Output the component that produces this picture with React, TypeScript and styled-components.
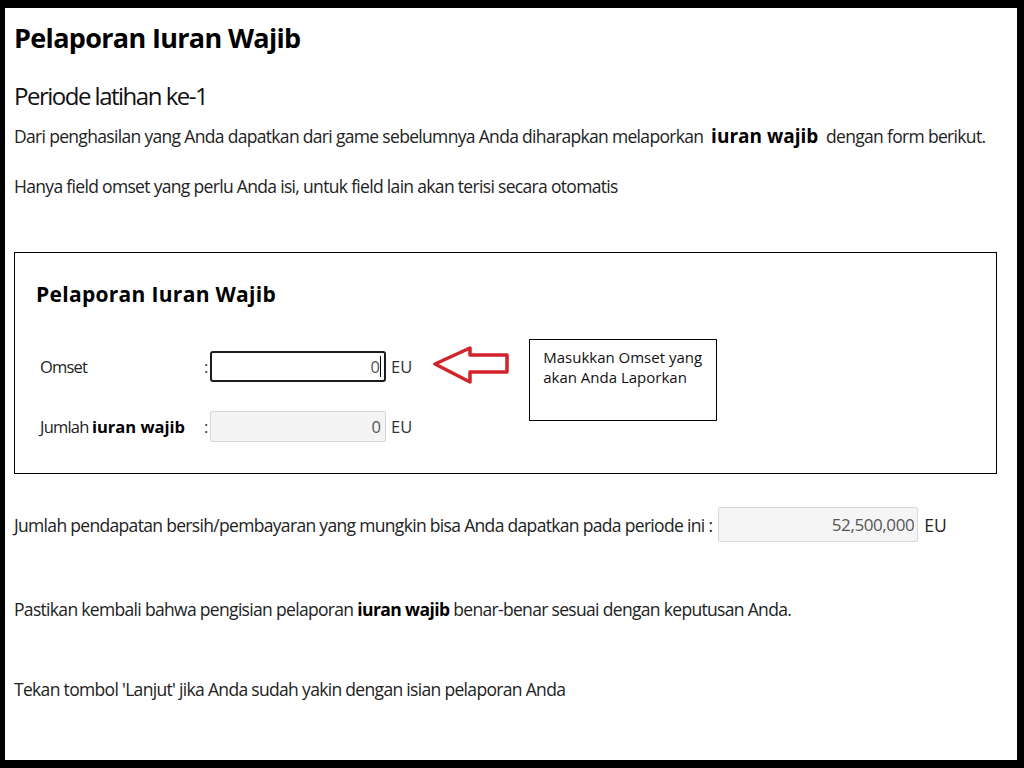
import React from "react";
import styled, { createGlobalStyle } from "styled-components";

const Global = createGlobalStyle`
  html, body { margin: 0; padding: 0; background: #000; }
  body { font-family: "Open Sans", "Noto Sans", sans-serif; color: #222; }
  * { box-sizing: border-box; }
`;

const Frame = styled.div`
  width: 1024px;
  height: 768px;
  padding: 8px 7px 8px 5px;
  background: #000;
`;

const Page = styled.main`
  height: 752px;
  background: #fff;
  padding: 13px 20px 0 9px;
  overflow: hidden;
`;

const Title = styled.h1`
  margin: 0;
  font-size: 27px;
  line-height: 34px;
  font-weight: 700;
  letter-spacing: -0.67px;
  color: #000;
`;

const Subtitle = styled.h2`
  margin: 25px 0 0;
  font-size: 24px;
  line-height: 32px;
  font-weight: 400;
  letter-spacing: -1.5px;
  color: #111;
`;

const Text = styled.p<{ $gap: number }>`
  margin: ${(p) => p.$gap}px 0 0;
  font-size: 17.5px;
  line-height: 26px;
  color: #222;
  white-space: nowrap;
  letter-spacing: -0.68px;
`;

const Strong = styled.b<{ $size?: number; $spacing?: number }>`
  font-weight: 700;
  color: #000;
  font-size: ${(p) => (p.$size ? `${p.$size}px` : "inherit")};
  letter-spacing: ${(p) => p.$spacing ?? 0}px;
`;

const Box = styled.section`
  margin-top: 53px;
  height: 222px;
  border: 1px solid #000;
  padding: 27px 0 0 21px;
`;

const BoxTitle = styled.h3`
  margin: 0;
  font-size: 21px;
  line-height: 28px;
  font-weight: 700;
  letter-spacing: 0.3px;
  color: #000;
`;

const FormArea = styled.div`
  margin-top: 31px;
  display: flex;
  align-items: flex-start;
`;

const Fields = styled.div`
  padding: 12px 0 0 4px;
  display: grid;
  grid-template-columns: 164px 6px 176px auto;
  row-gap: 29px;
  align-items: center;
`;

const Label = styled.span`
  font-size: 16.5px;
  line-height: 22px;
  letter-spacing: -0.8px;
  color: #222;
  white-space: nowrap;
`;

const Colon = styled.span`
  font-size: 16.5px;
  line-height: 22px;
  color: #333;
`;

const Unit = styled.span`
  margin-left: 5px;
  font-size: 16.5px;
  line-height: 22px;
  color: #333;
`;

const InputWrap = styled.div`
  position: relative;
  width: 176px;
  height: 31px;
`;

const Caret = styled.span`
  position: absolute;
  right: 5px;
  top: 5px;
  width: 1.5px;
  height: 21px;
  background: #000;
`;

const Input = styled.input<{ $active?: boolean }>`
  display: block;
  width: 176px;
  height: 31px;
  margin: 0;
  padding: 0 4px;
  text-align: right;
  font-family: inherit;
  font-size: 16.5px;
  color: #555;
  outline: none;
  background: ${(p) => (p.$active ? "#fff" : "#f4f4f4")};
  border: ${(p) => (p.$active ? "2px solid #1c1c1c" : "1px solid #d6d6d6")};
  border-radius: ${(p) => (p.$active ? 3 : 2)}px;
`;

const Arrow = styled.svg`
  flex: none;
  margin: 7px 0 0 20px;
`;

const Note = styled.div`
  flex: none;
  width: 188px;
  height: 82px;
  margin-left: 19px;
  border: 1px solid #000;
  padding: 7px 0 0 13px;
  font-size: 15px;
  line-height: 20px;
  color: #111;
`;

const IncomeRow = styled.div`
  margin-top: 33px;
  display: flex;
  align-items: center;
  font-size: 17.5px;
  line-height: 26px;
  white-space: nowrap;
`;

const IncomeLabel = styled.span`
  letter-spacing: -0.68px;
`;

const WideInput = styled.input`
  display: block;
  width: 200px;
  height: 35px;
  margin: 0 6px 0 6px;
  padding: 0 3px;
  text-align: right;
  font-family: inherit;
  font-size: 17px;
  letter-spacing: -0.4px;
  color: #555;
  background: #f5f5f5;
  border: 1px solid #d8d8d8;
  border-radius: 2px;
  outline: none;
`;

export default function App() {
  return (
    <Frame>
      <Global />
      <Page>
        <Title>Pelaporan Iuran Wajib</Title>
        <Subtitle>Periode latihan ke-1</Subtitle>
        <Text $gap={11}>
          Dari penghasilan yang Anda dapatkan dari game sebelumnya Anda diharapkan melaporkan{" "}
          &nbsp;<Strong $size={19}>iuran wajib</Strong>&nbsp; dengan form berikut.
        </Text>
        <Text $gap={24}>
          Hanya field omset yang perlu Anda isi, untuk field lain akan terisi secara otomatis
        </Text>

        <Box>
          <BoxTitle>Pelaporan Iuran Wajib</BoxTitle>
          <FormArea>
            <Fields>
              <Label>Omset</Label>
              <Colon>:</Colon>
              <InputWrap>
                <Input $active readOnly value="0" />
                <Caret />
              </InputWrap>
              <Unit>EU</Unit>
              <Label>
                Jumlah <Strong>iuran wajib</Strong>
              </Label>
              <Colon>:</Colon>
              <Input readOnly value="0" />
              <Unit>EU</Unit>
            </Fields>
            <Arrow width="78" height="40" viewBox="0 0 78 40">
              <polygon
                points="3,18 38,2 38,9 75,9 75,26 38,26 38,36"
                fill="#fff"
                stroke="#d2232b"
                strokeWidth="3.5"
                strokeLinejoin="round"
              />
            </Arrow>
            <Note>
              Masukkan Omset yang
              <br />
              akan Anda Laporkan
            </Note>
          </FormArea>
        </Box>

        <IncomeRow>
          <IncomeLabel>
            Jumlah pendapatan bersih/pembayaran yang mungkin bisa Anda dapatkan pada periode ini :
          </IncomeLabel>
          <WideInput readOnly value="52,500,000" />
          EU
        </IncomeRow>

        <Text $gap={54}>
          Pastikan kembali bahwa pengisian pelaporan <Strong $spacing={-0.6}>iuran wajib</Strong>{" "}
          benar-benar sesuai dengan keputusan Anda.
        </Text>
        <Text $gap={54}>Tekan tombol 'Lanjut' jika Anda sudah yakin dengan isian pelaporan Anda</Text>
      </Page>
    </Frame>
  );
}
